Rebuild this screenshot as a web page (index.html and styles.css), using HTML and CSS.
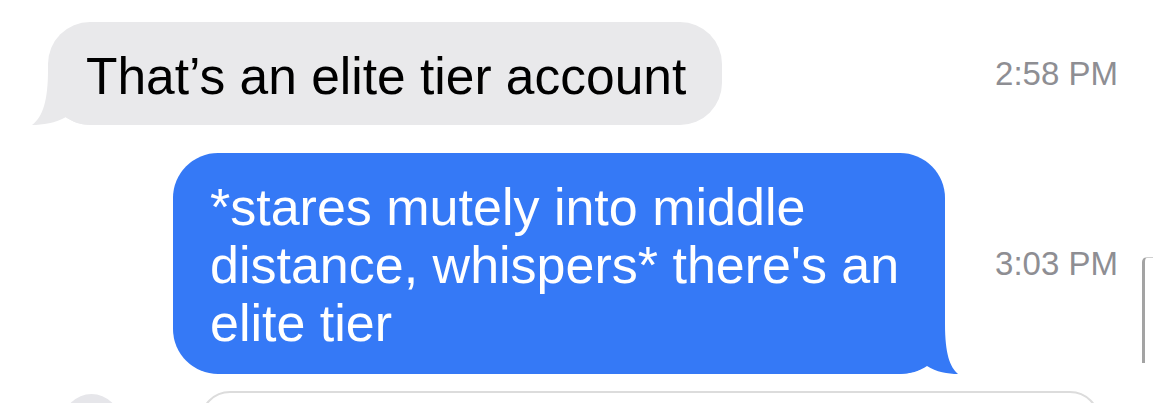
FILE: index.html
```html
<!DOCTYPE html>
<html>
<head>
<meta charset="utf-8">
<link rel="stylesheet" href="styles.css">
</head>
<body>
<div class="thread">
  <div class="row row-in">
    <div class="bubble in">That’s an elite tier account<svg class="tail tail-in" width="70" height="60" viewBox="0 0 70 60"><path d="M20,5 C20,35 15,52 4,60 C14,60 28,58 38,52 C45,57 52,60 64,60 L70,60 L70,5 Z" fill="#e9e9eb"/></svg></div>
    <div class="time">2:58 PM</div>
  </div>
  <div class="row row-out">
    <div class="bubble out">*stares mutely into middle distance, whispers* there's an elite tier<svg class="tail tail-out" width="80" height="55" viewBox="0 0 80 55"><path d="M65,5 C65,35 70,48 78,55 C68,55 56,53 47,47 C40,52 30,55 18,55 L0,55 L0,5 Z" fill="#3579f6"/></svg></div>
    <div class="time">3:03 PM</div>
  </div>
  <div class="composer">
    <div class="camera"></div>
    <div class="input"></div>
  </div>
</div>
<div class="edge"></div>
</body>
</html>
```
FILE: styles.css
```css
html, body {
  margin: 0;
  padding: 0;
  background: #ffffff;
  width: 1153px;
  height: 403px;
  overflow: hidden;
}
body {
  font-family: "Liberation Sans", Arial, sans-serif;
  position: relative;
}
.thread {
  display: flex;
  flex-direction: column;
  height: 403px;
  overflow: hidden;
}
.row {
  display: flex;
  align-items: center;
  padding-right: 35px;
  flex-shrink: 0;
}
.row-in {
  margin-top: 22px;
}
.row-out {
  margin-top: 28px;
}
.bubble {
  position: relative;
  line-height: 58px;
  box-sizing: border-box;
}
.in {
  margin-left: 48px;
  background: #e9e9eb;
  color: #000;
  font-size: 51.5px;
  padding: 25px 36px 20px 38px;
  border-radius: 42px;
}
.out {
  margin-left: 173px;
  width: 772px;
  background: #3579f6;
  color: #fff;
  font-size: 52px;
  padding: 25px 26px 22px 37px;
  border-radius: 45px;
}
.tail {
  position: absolute;
  bottom: 0;
  display: block;
}
.tail-in {
  left: -20px;
}
.tail-out {
  right: -15px;
}
.time {
  margin-left: auto;
  color: #8e8e93;
  font-size: 33px;
  white-space: nowrap;
}
.composer {
  display: flex;
  align-items: flex-start;
  margin-top: 17px;
  flex-shrink: 0;
}
.camera {
  width: 57px;
  height: 57px;
  border-radius: 50%;
  background: #e6e6ea;
  margin-left: 63px;
  margin-top: 3px;
}
.input {
  box-sizing: border-box;
  width: 900px;
  height: 60px;
  margin-left: 80px;
  border: 2px solid #dcdcdc;
  border-radius: 34px;
}
.edge {
  position: absolute;
  left: 1142px;
  top: 257px;
  width: 12px;
  height: 106px;
  box-sizing: border-box;
  border-left: 3px solid #a3a3a3;
  border-top: 1px solid #d0d0d0;
  border-radius: 5px 0 0 0;
}
```
